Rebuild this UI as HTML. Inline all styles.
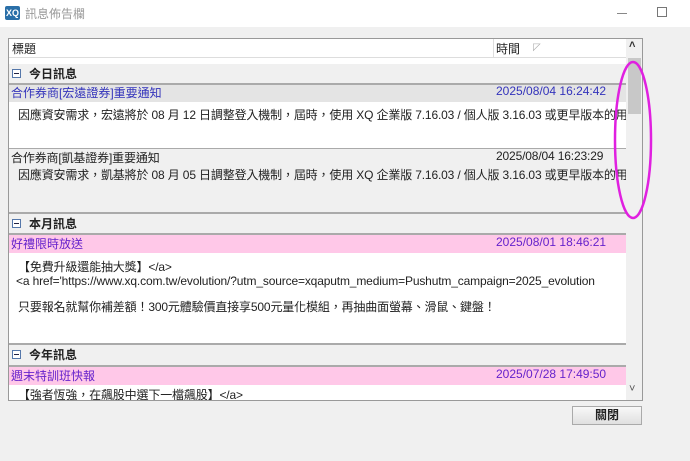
<!DOCTYPE html>
<html><head><meta charset="utf-8"><style>
*{margin:0;padding:0;box-sizing:border-box}
body{width:690px;height:461px;background:#f0f0f0;font-family:"Liberation Sans","Noto Sans CJK TC",sans-serif;font-size:12px;color:#222;position:relative;overflow:hidden}
.title{position:absolute;left:0;top:0;width:690px;height:27px;background:#fff}
.abs{position:absolute;white-space:nowrap}
.list{position:absolute;left:8px;top:38px;width:635px;height:363px;border:1px solid #999;background:#fff;overflow:hidden}
.row{position:absolute;left:0;width:617px;overflow:hidden;white-space:nowrap}
.grp{background:#f0f0f0;font-weight:bold;font-size:12px}
.minus{position:absolute;left:3px;top:5px;width:9px;height:9px;border:1px solid #5577aa;background:#fff}
.minus:after{content:"";position:absolute;left:1px;top:3px;width:5px;height:1px;background:#224}
.line{position:absolute;left:0;width:617px;height:2px;background:#aaa}
.blue{color:#3333bb}
.purple{color:#6622cc}
.t{letter-spacing:-0.15px}
</style></head><body>
<div class="title"></div>
<div class="abs" style="left:5px;top:6px;width:15px;height:14px;background:#2a6fa8;border-radius:2px;color:#fff;font-size:9px;line-height:14px;text-align:center;font-weight:bold">XQ</div>
<div class="abs" style="left:25px;top:5px;color:#999;font-size:12px">訊息佈告欄</div>
<div class="abs" style="left:617px;top:13px;width:10px;height:1px;background:#888"></div>
<div class="abs" style="left:657px;top:7px;width:10px;height:10px;border:1px solid #777"></div>

<div class="list">
 <div class="row" style="top:0;height:19px;background:#fff;border-bottom:1px solid #ddd"><span class="abs" style="left:3px;top:1px">標題</span><span class="abs" style="left:484px;top:0;width:1px;height:19px;background:#ddd"></span><span class="abs" style="left:487px;top:1px">時間</span><span class="abs" style="left:524px;top:3px;color:#aaa;font-size:10px">◸</span></div>
 <div class="row grp" style="top:25px;height:20px"><span class="minus"></span><span class="abs" style="left:20px;top:1px">今日訊息</span></div>
 <div class="line" style="top:44px"></div>
 <div class="row blue" style="top:46px;height:17px;background:#e4e4e4"><span class="abs" style="left:2px;top:-1px">合作券商[宏遠證券]重要通知</span><span class="abs" style="left:487px;top:-1px">2025/08/04 16:24:42</span></div>
 <div class="row t" style="top:67px;height:42px"><span class="abs" style="left:9px;top:0">因應資安需求，宏遠將於 08 月 12 日調整登入機制，屆時，使用 XQ 企業版 7.16.03 / 個人版 3.16.03 或更早版本的用戶</span></div>
 <div class="row" style="top:109px;height:1px;background:#aaa"></div>
 <div class="row t" style="top:110px;height:63px;background:#f0f0f0"><span class="abs" style="left:2px;top:0">合作券商[凱基證券]重要通知</span><span class="abs" style="left:487px;top:0">2025/08/04 16:23:29</span><span class="abs" style="left:9px;top:17px">因應資安需求，凱基將於 08 月 05 日調整登入機制，屆時，使用 XQ 企業版 7.16.03 / 個人版 3.16.03 或更早版本的用戶</span></div>
 <div class="line" style="top:173px"></div>
 <div class="row grp" style="top:175px;height:20px"><span class="minus"></span><span class="abs" style="left:20px;top:1px">本月訊息</span></div>
 <div class="line" style="top:194px"></div>
 <div class="row purple" style="top:196px;height:18px;background:#ffc8e8"><span class="abs" style="left:2px;top:0">好禮限時放送</span><span class="abs" style="left:487px;top:0">2025/08/01 18:46:21</span></div>
 <div class="row t" style="top:218px;height:90px"><span class="abs" style="left:9px;top:1px">【免費升級還能抽大獎】&lt;/a&gt;</span><span class="abs" style="left:7px;top:17px">&lt;a href='https://www.xq.com.tw/evolution/?utm_source=xqaputm_medium=Pushutm_campaign=2025_evolution</span><span class="abs" style="left:9px;top:41px">只要報名就幫你補差額！300元體驗價直接享500元量化模組，再抽曲面螢幕、滑鼠、鍵盤！</span></div>
 <div class="line" style="top:304px"></div>
 <div class="row grp" style="top:306px;height:20px"><span class="minus"></span><span class="abs" style="left:20px;top:1px">今年訊息</span></div>
 <div class="line" style="top:326px"></div>
 <div class="row purple" style="top:328px;height:18px;background:#ffc8e8"><span class="abs" style="left:2px;top:0">週末特訓班快報</span><span class="abs" style="left:487px;top:0">2025/07/28 17:49:50</span></div>
 <div class="row t" style="top:348px;height:14px"><span class="abs" style="left:9px;top:-1px">【強者恆強，在飆股中選下一檔飆股】&lt;/a&gt;</span></div>
 <div class="abs" style="left:617px;top:0;width:17px;height:361px;background:#f0f0f0"></div>
 <div class="abs" style="left:620px;top:0;color:#333;font-size:11px;font-weight:bold">˄</div>
 <div class="abs" style="left:619px;top:19px;width:13px;height:56px;background:#c8c8c8"></div>
 <div class="abs" style="left:620px;top:344px;color:#555;font-size:11px">˅</div>
</div>
<div class="abs" style="left:572px;top:406px;width:70px;height:19px;border:1px solid #aaa;background:linear-gradient(#f8f8f8,#e0e0e0);text-align:center;line-height:17px;font-weight:bold">關閉</div>
<svg class="abs" style="left:0;top:0" width="690" height="461"><ellipse cx="633" cy="140" rx="18" ry="78" fill="none" stroke="#e020e0" stroke-width="2.5"/></svg>
</body></html>
